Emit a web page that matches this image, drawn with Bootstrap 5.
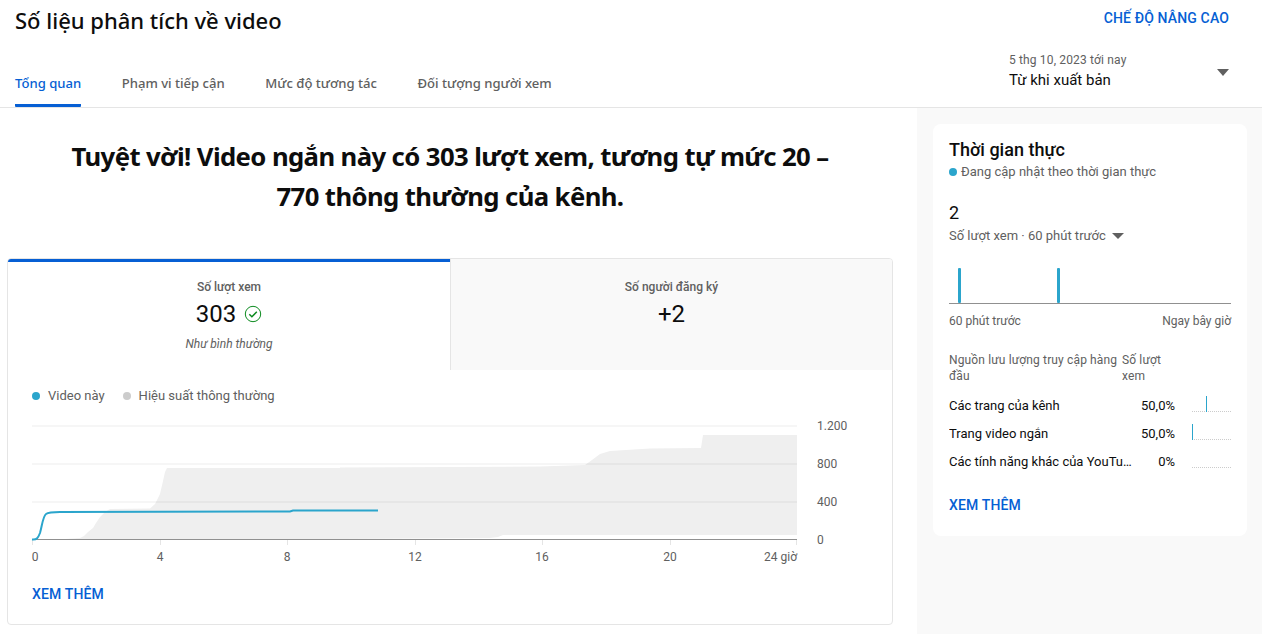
<!DOCTYPE html>
<html lang="vi">
<head>
    <meta charset="utf-8" />
    <meta name="viewport" content="width=device-width, initial-scale=1">
    <title>Số liệu phân tích về video</title>
    <link href="https://cdn.jsdelivr.net/npm/bootstrap@5.3.0/dist/css/bootstrap.min.css" rel="stylesheet">
    <style>
        html, body { height: 634px; overflow: hidden; }
        body { font-family: Roboto, "Liberation Sans", sans-serif; color: #0d0d0d; background: #fff; font-size: 13px; }
        .yt-top { height: 108px; border-bottom: 1px solid #e5e5e5; padding: 0 33px 0 15px; }
        .yt-title { font-family: "Noto Sans", sans-serif; font-size: 22px; font-weight: 500; line-height: 30px; margin: 5px 0 0; }
        .yt-link { color: #065fd4; font-weight: 500; font-size: 14px; letter-spacing: .14px; text-decoration: none; }
        .yt-tabs { gap: 40.5px; margin-top: 35px; }
        .yt-tab { font-family: "Noto Sans", sans-serif; font-size: 13.1px; font-weight: 500; color: #606060; text-decoration: none; height: 37px; line-height: 26px; }
        .yt-tab.on { color: #065fd4; border-bottom: 3px solid #065fd4; border-radius: 0 0 1px 1px; }
        .yt-range { width: 220px; margin-top: 23px; }
        .yt-range-sub { font-size: 12px; letter-spacing: .15px; color: #606060; line-height: 16px; }
        .yt-range-main { font-size: 15px; line-height: 24px; }
        .yt-caret { width: 0; height: 0; border-left: 6px solid transparent; border-right: 6px solid transparent; border-top: 7px solid #606060; }
        .yt-body { height: 526px; }
        .yt-main { width: 917px; padding: 0 24px 0 7px; }
        .yt-side { width: 345px; background: #f9f9f9; padding: 16px 15px 0 16px; }
        .yt-head { font-family: "Noto Sans", sans-serif; font-size: 25.7px; font-weight: 700; line-height: 40px; width: 780px; margin: 29px auto 41px; letter-spacing: -.6px; }
        .yt-card { border: 1px solid #e5e5e5; border-radius: 4px; height: 367px; overflow: hidden; }
        .yt-stat { height: 111px; text-align: center; padding-top: 19px; }
        .yt-stat.on { border-top: 3px solid #065fd4; padding-top: 16px; }
        .yt-stat.off { background: #f9f9f9; border-left: 1px solid #e5e5e5; }
        .yt-stat-label { font-size: 12px; font-weight: 500; color: #606060; line-height: 18px; }
        .yt-stat-num { font-size: 24px; line-height: 36px; }
        .yt-stat-note { font-size: 12px; font-style: italic; color: #606060; line-height: 18px; margin-top: 3px; }
        .yt-legend { font-size: 13px; color: #606060; padding: 17px 0 0 24px; gap: 18px; line-height: 18px; }
        .yt-dot { width: 8px; height: 8px; border-radius: 50%; display: inline-block; margin-right: 8px; }
        .yt-chart { display: block; margin: 13px 0 0; }
        .yt-chart text { font-family: Roboto, sans-serif; font-size: 12px; fill: #606060; }
        .yt-more { display: inline-block; margin: 16px 0 0 24px; }
        .yt-panel { background: #fff; border-radius: 8px; height: 412px; padding: 14px 15px 0 16px; }
        .yt-panel-title { font-size: 18px; font-weight: 500; line-height: 24px; }
        .yt-live { color: #606060; font-size: 13px; line-height: 18px; margin-top: 1px; }
        .yt-live .yt-dot { margin-right: 4px; }
        .yt-count { font-size: 18px; line-height: 24px; margin-top: 20px; }
        .yt-count-sub { color: #606060; font-size: 13px; line-height: 18px; margin-top: 2px; gap: 6px; }
        .yt-caret-sm { width: 0; height: 0; border-left: 6px solid transparent; border-right: 6px solid transparent; border-top: 6px solid #606060; }
        .yt-bars { display: block; margin-top: 22px; }
        .yt-axis { font-size: 12px; color: #606060; line-height: 16px; margin-top: 9px; width: 282px; }
        .yt-th { font-size: 12px; letter-spacing: .14px; color: #606060; line-height: 16px; margin-top: 23px; }
        .yt-th-a { width: 173px; }
        .yt-th-b { width: 60px; }
        .yt-tr { height: 28px; font-size: 13px; line-height: 28px; width: 283px; }
        .yt-tr-name { width: 184px; white-space: nowrap; overflow: hidden; text-overflow: ellipsis; }
        .yt-tr-pct { width: 42px; text-align: right; }
        .yt-tr svg { margin: 0 0 4px 17px; }
        .yt-rows { margin-top: 8px; }
        .yt-panel .yt-more { margin: 19px 0 0 0; }
    </style>
</head>
<body>
    <header class="yt-top d-flex justify-content-between">
        <div class="d-flex flex-column">
            <h1 class="yt-title">Số liệu phân tích về video</h1>
            <nav class="yt-tabs d-flex">
                <a href="#" class="yt-tab on">Tổng quan</a>
                <a href="#" class="yt-tab">Phạm vi tiếp cận</a>
                <a href="#" class="yt-tab">Mức độ tương tác</a>
                <a href="#" class="yt-tab">Đối tượng người xem</a>
            </nav>
        </div>
        <div class="d-flex flex-column align-items-end">
            <a href="#" class="yt-link mt-2">CHẾ ĐỘ NÂNG CAO</a>
            <div class="yt-range d-flex justify-content-between align-items-center">
                <div>
                    <div class="yt-range-sub">5 thg 10, 2023 tới nay</div>
                    <div class="yt-range-main">Từ khi xuất bản</div>
                </div>
                <span class="yt-caret"></span>
            </div>
        </div>
    </header>
    <div class="yt-body d-flex">
        <main class="yt-main">
            <h2 class="yt-head text-center">Tuyệt vời! Video ngắn này có 303 lượt xem, tương tự mức 20 – 770 thông thường của kênh.</h2>
            <section class="yt-card">
                <div class="row g-0">
                    <div class="col-6 yt-stat on">
                        <div class="yt-stat-label">Số lượt xem</div>
                        <div class="yt-stat-num d-flex justify-content-center align-items-center gap-2">303
                            <svg width="18" height="18" viewBox="0 0 18 18" fill="none" stroke="#0b8a1e"><circle cx="9" cy="9" r="7.700" stroke-width="1"/><path d="M5.300 9.200l2.600 2.600 4.900-5" stroke-width="1.500"/></svg>
                        </div>
                        <div class="yt-stat-note">Như bình thường</div>
                    </div>
                    <div class="col-6 yt-stat off">
                        <div class="yt-stat-label">Số người đăng ký</div>
                        <div class="yt-stat-num">+2</div>
                    </div>
                </div>
                <div class="yt-legend d-flex">
                    <span><span class="yt-dot" style="background:#2ba5cc"></span>Video này</span>
                    <span><span class="yt-dot" style="background:#ccc"></span>Hiệu suất thông thường</span>
                </div>
                <svg class="yt-chart" width="884" height="150" viewBox="8 418 884 150">
                    <path fill="#efefef" d="M65 539 L80 538 L84 536 L88 532 L93 528 L96 523 L100 517 L105 512 L110 509 L150 508.500 L155 504 L160 494 L163 481 L165 472 L167 468 L340 468 L340 467.500 L540 466.500 L585 465 L592 460 L600 454 L610 451 L650 448.500 L701 448 L703 435 L797 435 L797 535 L503 535 L498 537 L490 538 L340 539 Z"/>
                    <g stroke="#000" stroke-opacity=".05" stroke-width="1.500">
                        <path d="M32 426H797M32 464H797M32 502H797"/>
                    </g>
                    <path d="M32 539.500H797" stroke="#909090" stroke-width="1"/>
                    <path d="M32.500 540v5M160.500 540v5M287.500 540v5M415.500 540v5M542.500 540v5M670.500 540v5M796.500 540v5" stroke="#e5e5e5"/>
                    <path fill="none" stroke="#2ba5cc" stroke-width="2" d="M32 539.500 C37 540 38 538 40 533 C42 526 43 516 46 514 C48 512.500 55 512 60 512 L290 511.500 L293 510.500 L378 510.500"/>
                    <text x="35" y="561" text-anchor="middle">0</text>
                    <text x="160" y="561" text-anchor="middle">4</text>
                    <text x="287" y="561" text-anchor="middle">8</text>
                    <text x="415" y="561" text-anchor="middle">12</text>
                    <text x="542" y="561" text-anchor="middle">16</text>
                    <text x="670" y="561" text-anchor="middle">20</text>
                    <text x="797" y="561" text-anchor="end">24 giờ</text>
                    <text x="817" y="430">1.200</text>
                    <text x="817" y="468">800</text>
                    <text x="817" y="506">400</text>
                    <text x="817" y="544">0</text>
                </svg>
                <a href="#" class="yt-link yt-more">XEM THÊM</a>
            </section>
        </main>
        <aside class="yt-side">
            <div class="yt-panel">
                <div class="yt-panel-title">Thời gian thực</div>
                <div class="yt-live"><span class="yt-dot" style="background:#2ba5cc"></span>Đang cập nhật theo thời gian thực</div>
                <div class="yt-count">2</div>
                <div class="yt-count-sub d-flex align-items-center">Số lượt xem · 60 phút trước <span class="yt-caret-sm"></span></div>
                <svg class="yt-bars" width="282" height="37" viewBox="0 0 282 37">
                    <path d="M0 36.500H282" stroke="#909090"/>
                    <rect x="9" y="1" width="3" height="35" rx="1" fill="#2ba5cc"/>
                    <rect x="108" y="1" width="3" height="35" rx="1" fill="#2ba5cc"/>
                </svg>
                <div class="yt-axis d-flex justify-content-between"><span>60 phút trước</span><span>Ngay bây giờ</span></div>
                <div class="yt-th d-flex">
                    <div class="yt-th-a">Nguồn lưu lượng truy cập hàng đầu</div>
                    <div class="yt-th-b">Số lượt xem</div>
                </div>
                <div class="yt-rows">
                    <div class="yt-tr d-flex align-items-center">
                        <div class="yt-tr-name">Các trang của kênh</div>
                        <div class="yt-tr-pct">50,0%</div>
                        <svg width="40" height="16" viewBox="0 0 40 16"><path d="M0 15.500H40" stroke="#ccc" stroke-dasharray="1 1"/><rect x="14" y="0" width="1" height="16" fill="#2ba5cc"/></svg>
                    </div>
                    <div class="yt-tr d-flex align-items-center">
                        <div class="yt-tr-name">Trang video ngắn</div>
                        <div class="yt-tr-pct">50,0%</div>
                        <svg width="40" height="16" viewBox="0 0 40 16"><path d="M0 15.500H40" stroke="#ccc" stroke-dasharray="1 1"/><rect x="0" y="0" width="1" height="16" fill="#2ba5cc"/></svg>
                    </div>
                    <div class="yt-tr d-flex align-items-center">
                        <div class="yt-tr-name">Các tính năng khác của YouTube</div>
                        <div class="yt-tr-pct">0%</div>
                        <svg width="40" height="16" viewBox="0 0 40 16"><path d="M0 15.500H40" stroke="#ccc" stroke-dasharray="1 1"/></svg>
                    </div>
                </div>
                <a href="#" class="yt-link yt-more">XEM THÊM</a>
            </div>
        </aside>
    </div>
    <script src="https://cdn.jsdelivr.net/npm/bootstrap@5.3.0/dist/js/bootstrap.bundle.min.js"></script>
</body>
</html>
